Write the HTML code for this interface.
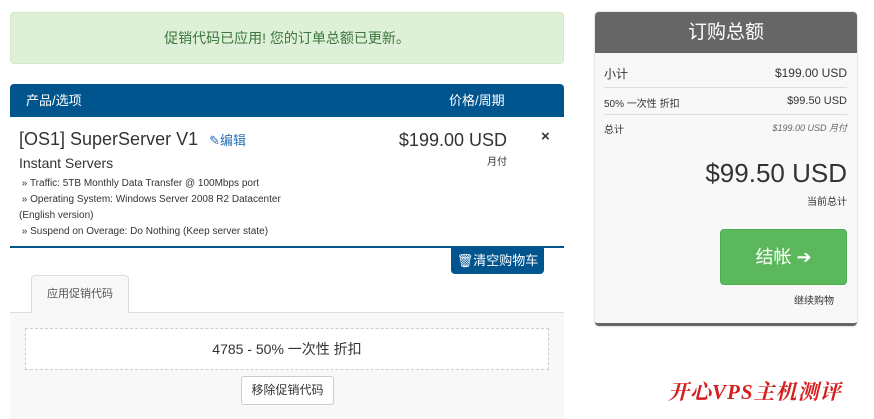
<!DOCTYPE html>
<html><head><meta charset="utf-8"><style>
*{box-sizing:border-box;margin:0;padding:0}
body{width:874px;height:419px;background:#fff;font-family:"Liberation Sans","Noto Sans CJK SC",sans-serif;color:#333;position:relative;overflow:hidden}
.a{position:absolute}
</style></head><body>
<div class="a" style="left:10px;top:12px;width:554px;height:52px;background:#dff0d8;border:1px solid #d6e9c6;border-radius:4px;color:#3c763d;font-size:14px;text-align:center;line-height:50px">促销代码已应用! 您的订单总额已更新。</div>

<div class="a" style="left:10px;top:84px;width:554px;height:33px;background:#00558f;border-radius:4px 4px 0 0;color:#fff;font-size:13px;line-height:33px">
<span class="a" style="left:16px">产品/选项</span><span class="a" style="left:439px">价格/周期</span></div>
<div class="a" style="left:19px;top:129px;font-size:18px;color:#333">[OS1] SuperServer V1 <span style="font-size:13px;color:#2a6fb5;margin-left:6px">✎编辑</span></div>
<div class="a" style="left:19px;top:155px;font-size:14px">Instant Servers</div>
<div class="a" style="left:19px;top:176px;font-size:10px;line-height:16px;width:300px">&nbsp;» Traffic: 5TB Monthly Data Transfer @ 100Mbps port<br>&nbsp;» Operating System: Windows Server 2008 R2 Datacenter (English version)<br>&nbsp;» Suspend on Overage: Do Nothing (Keep server state)</div>
<div class="a" style="left:380px;top:130px;width:127px;text-align:right;font-size:18px">$199.00 USD</div>
<div class="a" style="left:380px;top:153px;width:127px;text-align:right;font-size:10px">月付</div>
<div class="a" style="left:541px;top:128px;font-size:15px;font-weight:bold;color:#333">×</div>
<div class="a" style="left:10px;top:246px;width:554px;height:2px;background:#00558f"></div>
<div class="a" style="left:451px;top:248px;width:93px;height:26px;background:#00558f;border-radius:0 0 4px 4px;color:#fff;font-size:13px;line-height:26px;text-align:center">🗑清空购物车</div>

<div class="a" style="left:31px;top:275px;width:98px;height:38px;border:1px solid #ddd;border-bottom:none;border-radius:4px 4px 0 0;background:#f8f8f8;font-size:11px;line-height:36px;text-align:center;color:#555;z-index:2">应用促销代码</div>
<div class="a" style="left:10px;top:312px;width:554px;height:107px;background:#f8f8f8;border-top:1px solid #ddd"></div>
<div class="a" style="left:25px;top:328px;width:524px;height:42px;border:1px dashed #ccc;background:#fff;font-size:14px;line-height:40px;text-align:center">4785 - 50% 一次性 折扣</div>
<div class="a" style="left:241px;top:376px;width:93px;height:29px;border:1px solid #ccc;border-radius:3px;background:#fff;font-size:12px;line-height:27px;text-align:center">移除促销代码</div>

<div class="a" style="left:595px;top:12px;width:262px;height:314px;background:#f8f8f8;border-radius:4px;border-bottom:3px solid #666;box-shadow:0 0 2px #bbb"></div>
<div class="a" style="left:595px;top:12px;width:262px;height:41px;background:#666;border-radius:4px 4px 0 0;color:#fff;font-size:19px;line-height:41px;text-align:center">订购总额</div>
<div class="a" style="left:604px;top:65px;font-size:12px">小计</div>
<div class="a" style="left:700px;top:66px;width:147px;text-align:right;font-size:12px">$199.00 USD</div>
<div class="a" style="left:604px;top:87px;width:243px;height:1px;background:#ddd"></div>
<div class="a" style="left:604px;top:95px;font-size:10px">50% 一次性 折扣</div>
<div class="a" style="left:700px;top:95px;width:147px;text-align:right;font-size:11px">$99.50 USD</div>
<div class="a" style="left:604px;top:114px;width:243px;height:1px;background:#ddd"></div>
<div class="a" style="left:604px;top:121px;font-size:10px">总计</div>
<div class="a" style="left:700px;top:121px;width:147px;text-align:right;font-size:9px;font-style:italic;color:#666">$199.00 USD 月付</div>
<div class="a" style="left:650px;top:158px;width:197px;text-align:right;font-size:26px">$99.50 USD</div>
<div class="a" style="left:700px;top:193px;width:147px;text-align:right;font-size:10px">当前总计</div>
<div class="a" style="left:720px;top:229px;width:127px;height:56px;background:#5cb85c;border:1px solid #4cae4c;border-radius:4px;color:#fff;font-size:18px;line-height:54px;text-align:center">结帐 ➔</div>
<div class="a" style="left:700px;top:292px;width:134px;text-align:right;font-size:10px">继续购物</div>

<div class="a" style="left:668px;top:376px;font-size:21px;color:#d42020;font-style:italic;font-weight:bold;font-family:'Liberation Serif','Noto Serif CJK SC',serif;letter-spacing:1px">开心VPS主机测评</div>
</body></html>
